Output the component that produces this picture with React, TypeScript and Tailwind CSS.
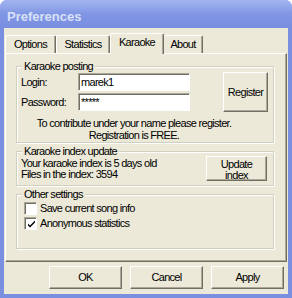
import type { ReactNode } from 'react'

function GroupBox({ title, className, children }: { title: string; className: string; children?: ReactNode }) {
  return (
    <div className={`relative ml-[10px] w-[258px] border border-[#d0d0bf] shadow-[inset_1px_1px_0_#fff,1px_1px_0_#fff] ${className}`}>
      <span className="absolute left-[5px] -top-[6px] px-[2px] bg-[#ece9d8] leading-[11px] whitespace-nowrap">
        {title}
      </span>
      {children}
    </div>
  )
}

function Button({ className, children }: { className: string; children: ReactNode }) {
  return (
    <div
      className={`border border-t-white border-l-white border-r-[#716f64] border-b-[#716f64] shadow-[inset_-1px_-1px_0_#aca899] bg-[#ece9d8] flex flex-col text-center ${className}`}
    >
      {children}
    </div>
  )
}

function TextInput({ value }: { value: string }) {
  return (
    <div className="w-[112px] h-[18px] border border-t-[#aca899] border-l-[#aca899] border-r-white border-b-white shadow-[inset_1px_1px_0_#716f64] bg-white pl-[2px] pt-[2px] leading-[13px] whitespace-nowrap">
      {value}
    </div>
  )
}

function Checkbox({ checked, label }: { checked: boolean; label: string }) {
  return (
    <div className="flex items-center h-[13px]">
      <div className="w-[13px] h-[13px] border border-t-[#aca899] border-l-[#aca899] border-r-white border-b-white shadow-[inset_1px_1px_0_#716f64] bg-white flex items-center justify-center">
        {checked && (
          <svg width="9" height="9" viewBox="0 0 9 9" className="ml-[1px] mt-[1px]">
            <path d="M1 3.5 L1 5.5 L3 7.5 L8 2.5 L8 0.5 L3 5.5 Z" fill="#000" />
          </svg>
        )}
      </div>
      <span className="ml-[3px] whitespace-nowrap">{label}</span>
    </div>
  )
}

export default function App() {
  return (
    <div className="w-[292px] h-[298px] bg-white">
      <div className="w-[292px] h-[298px] flex flex-col rounded-t-[7px] overflow-hidden bg-[#7b8fe1] font-['Liberation_Sans',sans-serif] text-[11px] tracking-[-0.7px] text-black">
        {/* Title bar */}
        <div className="h-[28px] shrink-0 flex items-center pl-[7px] pt-[5px] bg-gradient-to-b from-[#a3b5f0] via-[#8096e4] to-[#7a8ee0]">
          <span className="font-bold text-[13px] tracking-normal text-[#d8e1f8]">Preferences</span>
        </div>

        <div className="flex-1 mx-[4px] mb-[4px] bg-[#ece9d8] flex flex-col">
          {/* Tabs */}
          <div className="h-[25px] pl-[1px] flex items-end relative z-10">
            <div className="w-[51px] h-[18px] border-t border-l border-white border-r border-r-[#716f64] shadow-[inset_-1px_0_0_#aca899] rounded-t-[2px] flex items-center justify-center">
              Options
            </div>
            <div className="w-[54px] h-[18px] border-t border-l border-white border-r border-r-[#716f64] shadow-[inset_-1px_0_0_#aca899] rounded-t-[2px] flex items-center justify-center">
              Statistics
            </div>
            <div className="w-[54px] h-[21px] -mb-[1px] bg-[#ece9d8] border-t border-l border-white border-r border-r-[#716f64] shadow-[inset_-1px_0_0_#aca899] rounded-t-[2px] flex items-center justify-center pb-[3px]">
              Karaoke
            </div>
            <div className="w-[39px] h-[18px] border-t border-white border-r border-r-[#716f64] shadow-[inset_-1px_0_0_#aca899] rounded-t-[2px] flex items-center justify-center">
              About
            </div>
          </div>

          {/* Panel */}
          <div className="ml-[1px] w-[282px] h-[209px] border border-t-white border-l-white border-r-[#716f64] border-b-[#716f64] shadow-[inset_-1px_-1px_0_#aca899] flex flex-col">
            <GroupBox title="Karaoke posting" className="mt-[12px] h-[77px]">
              <div className="flex pt-[5px] pl-[4px]">
                <div className="flex flex-col gap-[2px] mt-[1px]">
                  <div className="flex items-baseline">
                    <span className="w-[57px]">Login:</span>
                    <TextInput value="marek1" />
                  </div>
                  <div className="flex items-baseline">
                    <span className="w-[57px]">Password:</span>
                    <TextInput value="*****" />
                  </div>
                </div>
                <Button className="ml-[33px] w-[45px] h-[40px] justify-center">Register</Button>
              </div>
              <div className="mt-[5px] w-[234px] text-center leading-[12px] whitespace-nowrap">
                To contribute under your name please register.
                <br />
                Registration is FREE.
              </div>
            </GroupBox>

            <GroupBox title="Karaoke index update" className="mt-[8px] h-[35px]">
              <div className="flex justify-between pt-[5px] pl-[4px] pr-[6px]">
                <div className="pt-[1px] leading-[11px] whitespace-nowrap">
                  Your karaoke index is 5 days old
                  <br />
                  Files in the index: 3594
                </div>
                <Button className="-mt-[1px] w-[61px] h-[25px] pt-[2px] leading-[11px]">
                  <span>Update</span>
                  <span>index</span>
                </Button>
              </div>
            </GroupBox>

            <GroupBox title="Other settings" className="mt-[8px] h-[55px]">
              <div className="flex flex-col gap-[2px] pt-[7px] pl-[7px]">
                <Checkbox checked={false} label="Save current song info" />
                <Checkbox checked label="Anonymous statistics" />
              </div>
            </GroupBox>
          </div>

          {/* Dialog buttons */}
          <div className="mt-[4px] pl-[45px] flex gap-[8px]">
            <Button className="w-[73px] h-[23px] justify-center">OK</Button>
            <Button className="w-[73px] h-[23px] justify-center">Cancel</Button>
            <Button className="w-[73px] h-[23px] justify-center">Apply</Button>
          </div>
        </div>
      </div>
    </div>
  )
}
